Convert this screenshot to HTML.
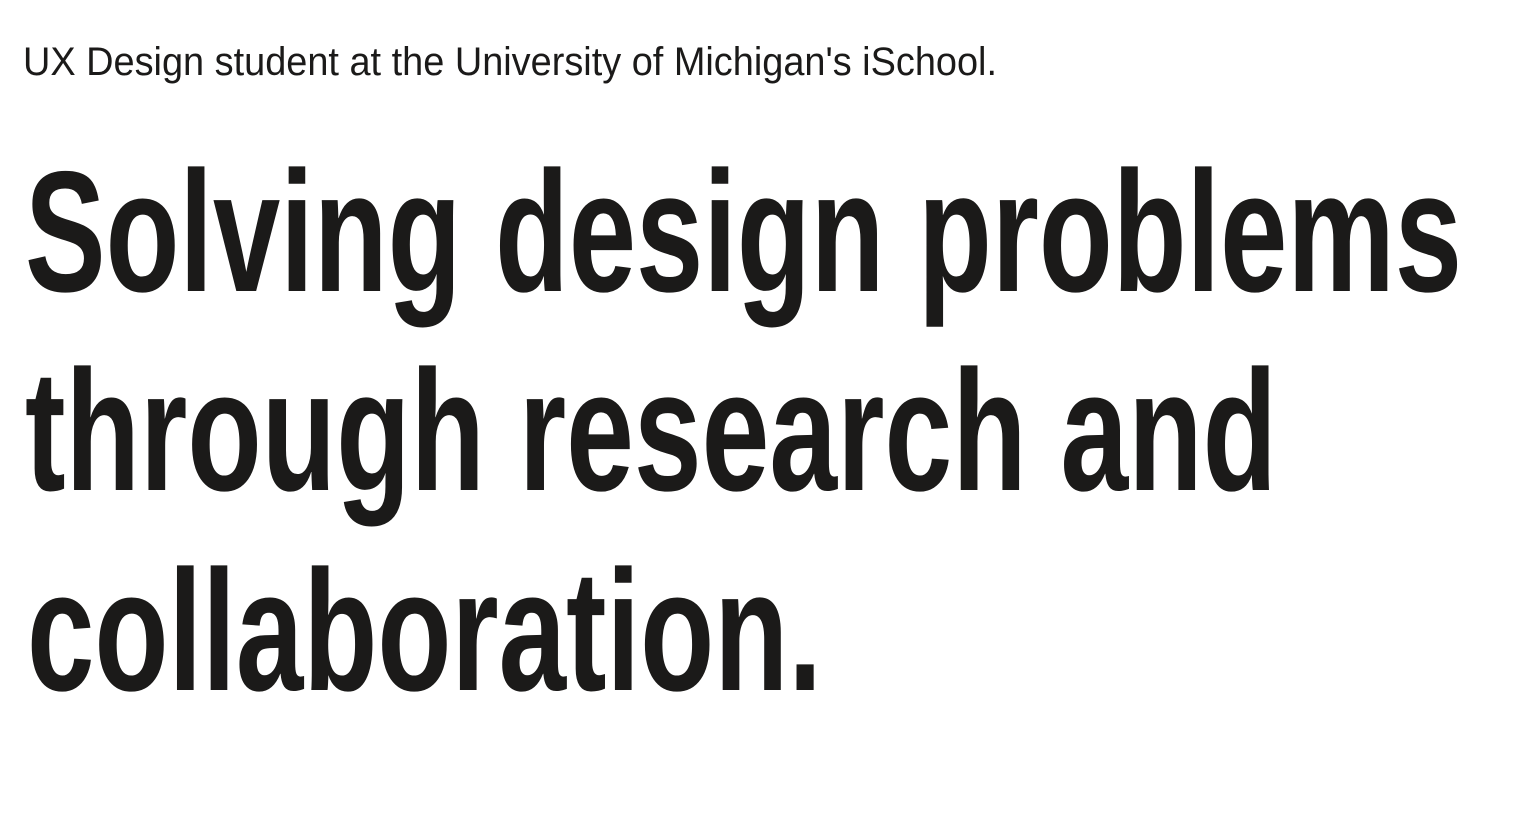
<!DOCTYPE html>
<html><head><meta charset="utf-8"><style>
html,body{margin:0;padding:0;background:#fff;width:1532px;height:824px;overflow:hidden}
svg{display:block}
</style></head><body>
<svg width="1532" height="824" viewBox="0 0 1532 824" xmlns="http://www.w3.org/2000/svg">
<g fill="#1b1a19" font-family="'Liberation Sans', sans-serif">
<text x="23" y="75" font-size="40" font-weight="400" textLength="974" lengthAdjust="spacingAndGlyphs">UX Design student at the University of Michigan's iSchool.</text>
<g font-size="172" font-weight="700">
<text x="25" y="291" textLength="1437" lengthAdjust="spacingAndGlyphs">Solving design problems</text>
<text x="25" y="490" textLength="1252" lengthAdjust="spacingAndGlyphs">through research and</text>
<text x="27" y="690" textLength="795" lengthAdjust="spacingAndGlyphs">collaboration.</text>
</g>
</g>
</svg>
</body></html>
